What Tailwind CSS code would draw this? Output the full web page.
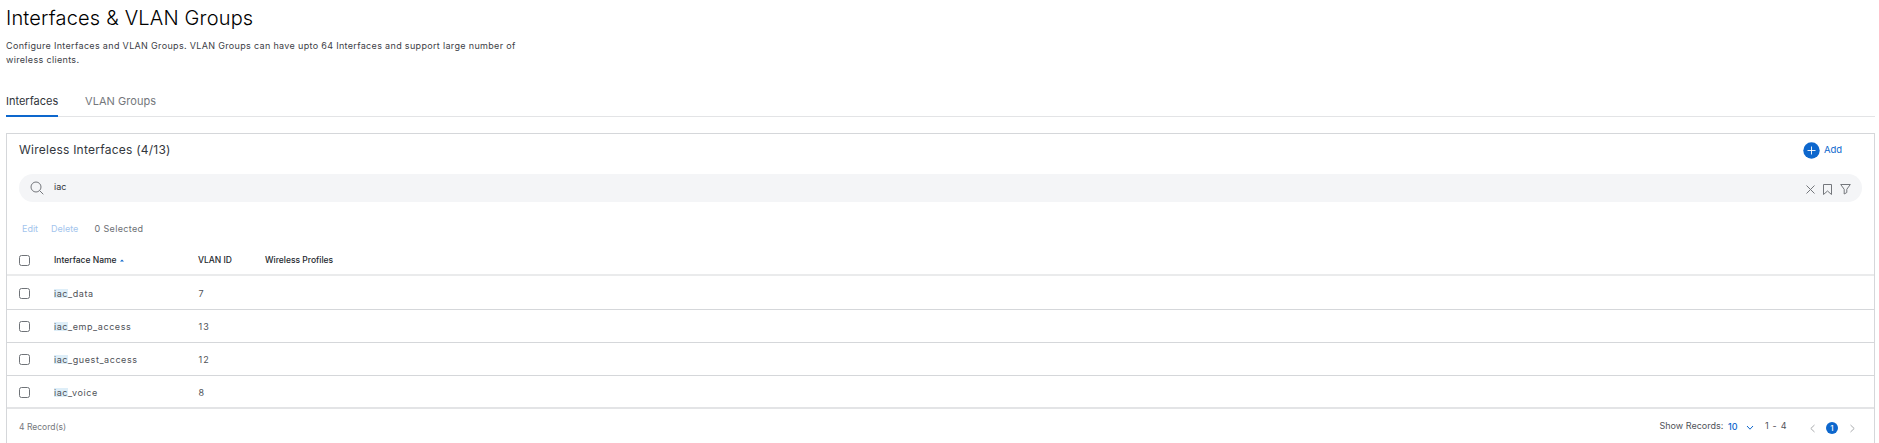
<!DOCTYPE html>
<html lang="en">
<head>
<meta charset="utf-8">
<title>Interfaces &amp; VLAN Groups</title>
<script src="https://cdn.jsdelivr.net/npm/@tailwindcss/browser@4"></script>
</head>
<body class="bg-white">
<div class="flex h-[443px] w-[1879px] flex-col overflow-hidden pl-[6px] pr-[4px] font-['Inter',sans-serif] text-[#4f5258]">
  <h1 class="h-[39px] pt-[6px] text-[20px] font-light leading-[24px] tracking-[0.18px] whitespace-nowrap text-black">Interfaces &amp; VLAN Groups</h1>
  <p class="h-[51px] text-[9px] leading-[14px] tracking-[0.33px] whitespace-nowrap text-[#3c4046]">Configure Interfaces and VLAN Groups. VLAN Groups can have upto 64 Interfaces and support large number of<br>wireless clients.</p>
  <nav class="flex h-[27px] gap-[27px] border-b border-[#e3e4e6] text-[11px] leading-[22px] whitespace-nowrap">
    <a class="h-[27px] w-[52px] border-b-2 border-[#0d67cd] text-[#30343a]">Interfaces</a>
    <a class="tracking-[0.05px] text-[#74777c]">VLAN Groups</a>
  </nav>
  <section class="mt-[16px] flex h-[310px] flex-col border border-b-0 border-[#d5d7da]">
    <div class="flex h-[40px] items-start justify-between pl-[12px] pr-[31px]">
      <h2 class="pt-[8px] text-[12px] leading-[16px] tracking-[0.24px] whitespace-nowrap text-[#33373d]">Wireless Interfaces (4/13)</h2>
      <button class="flex w-[40px] gap-[4px] pt-[8px] text-[#0d67cd]">
        <svg class="size-[17px] shrink-0" viewBox="0 0 17 17"><circle cx="8.5" cy="8.5" r="8.2" fill="#0d67cd"/><path d="M8.5 4.5v8M4.5 8.5h8" stroke="#fff" stroke-width=".9"/></svg>
        <span class="text-[9.5px] leading-[16px]">Add</span>
      </button>
    </div>
    <div class="ml-[12px] mr-[12px] flex h-[28px] shrink-0 rounded-[14px] bg-[#f4f5f7] pl-[11px] pr-[11px] text-[#74777c]">
      <svg class="mt-[7px] size-[14px]" viewBox="0 0 14 14" fill="none" stroke="currentColor"><circle cx="6" cy="6" r="5"/><path d="M9.6 9.6L13.3 13.3"/></svg>
      <span class="ml-[10px] grow text-[9px] leading-[26px] text-[#30343a]">iac</span>
      <svg class="mt-[11px] size-[9px]" viewBox="0 0 9 9" fill="none" stroke="currentColor"><path d="M.5 .5l8 8M8.5 .5l-8 8"/></svg>
      <svg class="mt-[10px] ml-[8px] h-[11px] w-[9px]" viewBox="0 0 9 11" fill="none" stroke="currentColor"><path d="M.5.5h8v10l-4-3.5-4 3.5z"/></svg>
      <svg class="mt-[10px] ml-[8px] h-[11px] w-[11px]" viewBox="0 0 11 11" fill="none" stroke="currentColor"><path d="M.7.5h9.6L6.8 5.3v3.2L4.2 10V5.3z"/></svg>
    </div>
    <div class="flex h-[44px] shrink-0 pt-[19px] pl-[15px] text-[9px] leading-[15px] whitespace-nowrap">
      <span class="w-[29px] text-[#a3c5ed]">Edit</span><span class="w-[43.5px] text-[#a3c5ed]">Delete</span><span class="tracking-[0.35px] text-[#6b6e73]">0 Selected</span>
    </div>
    <div class="flex h-[30px] shrink-0 items-start border-b-2 border-[#eaebec] pl-[12px] text-[8.5px] font-medium leading-[12px] whitespace-nowrap text-[#23282e]">
      <i class="mt-[9px] size-[11px] rounded-[2.5px] border border-[#6f7378] bg-white"></i>
      <span class="ml-[24px] flex w-[144px] gap-[3px] pt-[8px]">Interface Name <svg class="mt-[5px] h-[3px] w-[4px]" viewBox="0 0 4 3"><path d="M0 2.5L2 .6l2 1.9z" fill="#0d67cd"/></svg></span>
      <span class="w-[67px] pt-[8px]">VLAN ID</span><span class="pt-[8px]">Wireless Profiles</span>
    </div>
    <div class="flex h-[34px] shrink-0 items-start border-b border-[#d5d7da] pl-[12px] text-[9px] leading-[9px] tracking-[0.57px] whitespace-nowrap">
      <i class="mt-[12px] size-[11px] rounded-[2.5px] border border-[#6f7378]"></i>
      <span class="ml-[24px] w-[144.5px] pt-[13px]"><mark class="inline-block bg-[#deeef8] text-inherit">iac</mark>_data</span><span class="pt-[13px]">7</span>
    </div>
    <div class="flex h-[33px] shrink-0 items-start border-b border-[#d5d7da] pl-[12px] text-[9px] leading-[9px] tracking-[0.57px] whitespace-nowrap">
      <i class="mt-[11px] size-[11px] rounded-[2.5px] border border-[#6f7378]"></i>
      <span class="ml-[24px] w-[144.5px] pt-[12px]"><mark class="inline-block bg-[#deeef8] text-inherit">iac</mark>_emp_access</span><span class="pt-[12px] tracking-[1px]">13</span>
    </div>
    <div class="flex h-[33px] shrink-0 items-start border-b border-[#d5d7da] pl-[12px] text-[9px] leading-[9px] tracking-[0.57px] whitespace-nowrap">
      <i class="mt-[11px] size-[11px] rounded-[2.5px] border border-[#6f7378]"></i>
      <span class="ml-[24px] w-[144.5px] pt-[12px]"><mark class="inline-block bg-[#deeef8] text-inherit">iac</mark>_guest_access</span><span class="pt-[12px] tracking-[1px]">12</span>
    </div>
    <div class="flex h-[33px] shrink-0 items-start border-b-2 border-[#e3e4e6] pl-[12px] text-[9px] leading-[9px] tracking-[0.57px] whitespace-nowrap">
      <i class="mt-[11px] size-[11px] rounded-[2.5px] border border-[#6f7378]"></i>
      <span class="ml-[24px] w-[144.5px] pt-[12px]"><mark class="inline-block bg-[#deeef8] text-inherit">iac</mark>_voice</span><span class="pt-[12px]">8</span>
    </div>
    <div class="flex h-[34px] shrink-0 items-start pt-[10px] pl-[12px] pr-[19px] text-[9px] leading-[14px] whitespace-nowrap">
      <span class="grow pt-px text-[8.5px] text-[#74777c]">4 Record(s)</span>
      <span class="w-[68.5px]">Show Records:</span>
      <span class="w-[18px] pt-px font-medium text-[#0d67cd]">10</span>
      <svg class="mt-[6px] h-[6px] w-[8px]" viewBox="0 0 8 6" fill="none" stroke="#0d67cd"><path d="M1 1l3 3.2L7 1"/></svg>
      <span class="ml-[11px] w-[45px] tracking-[0.7px]">1 - 4</span>
      <svg class="mt-[5px] h-[9px] w-[5px]" viewBox="0 0 5 9" fill="none" stroke="#a9abae"><path d="M4.5 1l-3.7 3.5 3.7 3.5"/></svg>
      <b class="ml-[11px] mt-[3px] flex size-[12px] items-center justify-center rounded-full bg-[#0d67cd] text-[8px] font-medium text-white">1</b>
      <svg class="ml-[12px] mt-[5px] h-[9px] w-[5px]" viewBox="0 0 5 9" fill="none" stroke="#a9abae"><path d="M.5 1l3.7 3.5L.5 8"/></svg>
    </div>
  </section>
</div>
</body>
</html>
